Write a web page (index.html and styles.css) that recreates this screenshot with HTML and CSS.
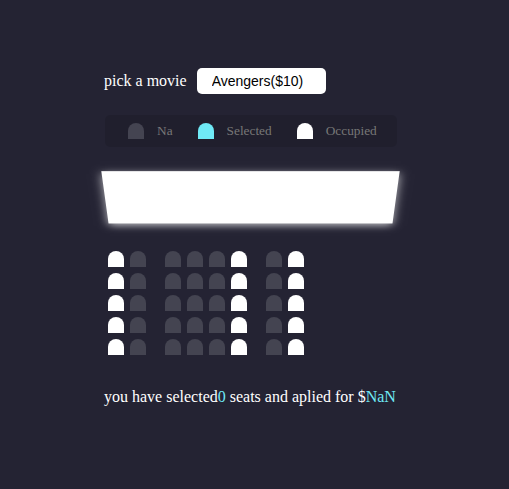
FILE: index.html
```html
<!DOCTYPE html>
<html lang="en">
<head>
<meta charset="UTF-8">
<title>Movie Seat Booking</title>
<link rel="stylesheet" href="styles.css">
</head>
<body>
<div class="app">
  <div class="movie-container">
    <label class="movie-label">pick a movie</label>
    <select class="movie-select">
      <option>Avengers($10)</option>
    </select>
  </div>

  <ul class="showcase">
    <li class="legend-item"><div class="seat"></div><small class="legend-text">Na</small></li>
    <li class="legend-item"><div class="seat selected"></div><small class="legend-text">Selected</small></li>
    <li class="legend-item"><div class="seat occupied"></div><small class="legend-text">Occupied</small></li>
  </ul>

  <div class="container">
    <div class="screen"></div>
    <div class="row"><div class="seat occupied"></div><div class="seat"></div><div class="seat"></div><div class="seat"></div><div class="seat"></div><div class="seat occupied"></div><div class="seat"></div><div class="seat occupied"></div></div>
    <div class="row"><div class="seat occupied"></div><div class="seat"></div><div class="seat"></div><div class="seat"></div><div class="seat"></div><div class="seat occupied"></div><div class="seat"></div><div class="seat occupied"></div></div>
    <div class="row"><div class="seat occupied"></div><div class="seat"></div><div class="seat"></div><div class="seat"></div><div class="seat"></div><div class="seat occupied"></div><div class="seat"></div><div class="seat occupied"></div></div>
    <div class="row"><div class="seat occupied"></div><div class="seat"></div><div class="seat"></div><div class="seat"></div><div class="seat"></div><div class="seat occupied"></div><div class="seat"></div><div class="seat occupied"></div></div>
    <div class="row"><div class="seat occupied"></div><div class="seat"></div><div class="seat"></div><div class="seat"></div><div class="seat"></div><div class="seat occupied"></div><div class="seat"></div><div class="seat occupied"></div></div>
  </div>

  <p class="text">you have selected<span class="count">0</span> seats and aplied for $<span class="total">NaN</span></p>
</div>
</body>
</html>
```

FILE: styles.css
```css
* {
  box-sizing: border-box;
}

html, body {
  margin: 0;
  padding: 0;
}

body {
  background-color: #242333;
  color: #fff;
  font-family: "Liberation Serif", "Times New Roman", serif;
  font-size: 16px;
  height: 489px;
  overflow: hidden;
}

.app {
  display: flex;
  flex-direction: column;
  align-items: flex-start;
  padding: 68px 0 0 104px;
}

.movie-container {
  display: flex;
  align-items: center;
  height: 26px;
  margin-bottom: 21px;
}

.movie-label {
  font-size: 16px;
  color: #fff;
}

.movie-select {
  -webkit-appearance: none;
  appearance: none;
  background-color: #fff;
  color: #000;
  border: 0;
  border-radius: 5px;
  font-family: "Liberation Sans", Arial, sans-serif;
  font-size: 14px;
  height: 26px;
  margin-left: 10px;
  padding: 0 16px 0 15px;
  width: 129px;
  outline: none;
}

.showcase {
  background: rgba(0, 0, 0, 0.1);
  padding: 5px 9px;
  border-radius: 5px;
  color: #777;
  list-style-type: none;
  display: flex;
  margin: 0 0 1px 1px;
}

.legend-item {
  display: flex;
  align-items: center;
  margin: 0 11px;
}

.legend-text {
  font-size: 13.33px;
  margin-left: 10px;
}

.seat {
  background-color: #444451;
  height: 16px;
  width: 16px;
  margin: 3px;
  border-top-left-radius: 10px;
  border-top-right-radius: 10px;
}

.seat.selected {
  background-color: #6feaf6;
}

.seat.occupied {
  background-color: #fff;
}

.container {
  perspective: 1000px;
  width: 291px;
  margin: 0 0 30px 1px;
}

.screen {
  background-color: #fff;
  height: 70px;
  width: 100%;
  margin: 15px 0;
  transform: rotateX(-45deg);
  box-shadow: 0 3px 10px rgba(255, 255, 255, 0.7);
}

.row {
  display: flex;
}

.row .seat:nth-of-type(2) {
  margin-right: 16px;
}

.row .seat:nth-last-of-type(2) {
  margin-left: 16px;
}

.text {
  margin: 0;
  font-size: 16px;
}

.count,
.total {
  color: #6feaf6;
}
```
